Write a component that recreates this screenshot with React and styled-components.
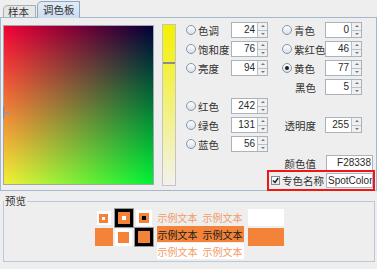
import React from "react";
import styled, { createGlobalStyle } from "styled-components";

const ORANGE = "#f28338";

const GlobalStyle = createGlobalStyle`
  body {
    margin: 0;
    background: #eeeeee;
    font-family: "Liberation Sans", "Noto Sans CJK SC", sans-serif;
    font-size: 10.5px;
    color: #333;
  }
`;

const Page = styled.div`
  width: 377px;
  height: 269px;
  overflow: hidden;
`;

// Tabs
const TabStrip = styled.div`
  display: flex;
  align-items: flex-end;
  height: 17px;
  padding-left: 3px;
  gap: 1px;
  position: relative;
  z-index: 1;
`;

const Tab = styled.div`
  box-sizing: border-box;
  width: ${(p) => (p.$active ? 43 : 33)}px;
  height: ${(p) => (p.$active ? 17 : 12)}px;
  margin-bottom: ${(p) => (p.$active ? -1 : 0)}px;
  padding-left: ${(p) => (p.$active ? 5 : 4)}px;
  display: flex;
  align-items: center;
  line-height: 12px;
  border: 1px solid ${(p) => (p.$active ? "#8ea6c2" : "#a7aeb6")};
  border-bottom: none;
  border-top-left-radius: 5px;
  background: ${(p) =>
    p.$active ? "linear-gradient(#e2ecf7, #cadcef)" : "#e6e6e6"};
  color: #333;
`;

const TabPanel = styled.div`
  box-sizing: border-box;
  height: 174px;
  border: 1px solid #a3b8cc;
  display: flex;
  align-items: flex-start;
  padding-left: 2px;
`;

// Color area
const ColorField = styled.div`
  position: relative;
  box-sizing: border-box;
  width: 151px;
  height: 160px;
  margin-top: 7px;
  border: 1px solid #a2a6aa;
  background: linear-gradient(to bottom, rgb(0, 0, 55), rgb(0, 242, 55)),
    linear-gradient(to right, rgb(242, 0, 0), rgb(0, 0, 0));
  background-blend-mode: screen;
`;

const FieldMarker = styled.svg`
  position: absolute;
  left: -1px;
  top: 80px;
`;

const Slider = styled.div`
  position: relative;
  box-sizing: border-box;
  width: 14px;
  height: 162px;
  margin: 6px 0 0 8px;
  border: 1px solid #c4c4c4;
  background: linear-gradient(#f4f000, #f2f2ee);
`;

const SliderThumb = styled.div`
  position: absolute;
  left: 0;
  right: 0;
  top: 37px;
  height: 2px;
  background: #8c8c8c;
`;

// Controls
const Controls = styled.div`
  display: flex;
  flex-direction: column;
  width: 193px;
  margin: 4px 0 0 6px;
`;

const Grid = styled.div`
  display: grid;
  grid-template-columns: 49px 37px 57px 50px;
  grid-auto-rows: 16px;
  row-gap: 3px;
`;

const RadioLabel = styled.div`
  grid-row: ${(p) => p.$row};
  grid-column: ${(p) => p.$col};
  display: flex;
  align-items: center;
  gap: 2px;
  padding-left: ${(p) => p.$indent}px;
  white-space: nowrap;
`;

const Radio = styled.span`
  position: relative;
  box-sizing: border-box;
  width: 10px;
  height: 10px;
  border-radius: 50%;
  border: 1px solid #8795a6;
  background: linear-gradient(#ffffff, #d6e0ea);
  flex: none;

  &::after {
    content: "";
    display: ${(p) => (p.$checked ? "block" : "none")};
    position: absolute;
    inset: 2px;
    border-radius: 50%;
    background: #1e1e1e;
  }
`;

const TextLabel = styled.div`
  grid-row: ${(p) => p.$row};
  grid-column: ${(p) => p.$col};
  display: flex;
  align-items: center;
  justify-content: flex-end;
  padding-right: 9px;
  white-space: nowrap;
`;

const SpinBox = styled.div`
  grid-row: ${(p) => p.$row};
  grid-column: ${(p) => p.$col};
  box-sizing: border-box;
  width: 37px;
  height: 16px;
  display: flex;
  border: 1px solid #aab2bc;
  background: #fff;
`;

const SpinValue = styled.div`
  flex: 1;
  text-align: right;
  padding-right: 2px;
  line-height: 14px;
  font-size: 10px;
  color: #2a2a2a;
`;

const SpinButtons = styled.div`
  width: 9px;
  display: flex;
  flex-direction: column;
  border-left: 1px solid #b8c0c8;
`;

const SpinButton = styled.div`
  flex: 1;
  display: flex;
  align-items: center;
  justify-content: center;
  background: #eef0f2;

  & + & {
    border-top: 1px solid #b8c0c8;
  }

  &::after {
    content: "";
    border-left: 2px solid transparent;
    border-right: 2px solid transparent;
    ${(p) =>
      p.$up ? "border-bottom: 2px solid #777;" : "border-top: 2px solid #777;"}
  }
`;

const ValueField = styled.div`
  grid-row: ${(p) => p.$row};
  grid-column: ${(p) => p.$col};
  box-sizing: border-box;
  width: 47px;
  height: 16px;
  margin-left: 1px;
  border: 1px solid #aab2bc;
  background: #fff;
  text-align: right;
  padding-right: 1px;
  line-height: 14px;
  font-size: 10px;
  color: #2a2a2a;
`;

const SpotBox = styled.div`
  align-self: flex-end;
  box-sizing: border-box;
  width: 108px;
  height: 21px;
  margin-top: -1px;
  border: 2px solid #f01616;
  display: flex;
  align-items: center;
  padding-left: 2px;
  gap: 2px;
`;

const CheckBox = styled.span`
  box-sizing: border-box;
  width: 9px;
  height: 9px;
  border: 1px solid #7d8b9b;
  background: linear-gradient(#ffffff, #dfe6ee);
  display: flex;
  align-items: center;
  justify-content: center;
  flex: none;
`;

const SpotLabel = styled.span`
  white-space: nowrap;
`;

const SpotField = styled.div`
  box-sizing: border-box;
  width: 48px;
  height: 15px;
  border: 1px solid #a8b8cc;
  background: #fff;
  padding-left: 1px;
  line-height: 13px;
  font-size: 10px;
  color: #2a2a2a;
  white-space: nowrap;
  overflow: hidden;
`;

// Preview
const PreviewGroup = styled.fieldset`
  margin: 4px 2px 0 3px;
  padding: 1px 0 2px;
  border: 1px solid #b9c9d9;
  min-width: 0;
`;

const PreviewTitle = styled.legend`
  padding: 0 1px;
  line-height: 13px;
  color: #333;
`;

const PreviewBody = styled.div`
  display: flex;
  justify-content: center;
  align-items: flex-start;
`;

const SwatchGrid = styled.div`
  display: grid;
  grid-template-columns: repeat(3, 18px);
  grid-auto-rows: 18px;
  gap: 1px 2px;
  place-items: center;
  margin-right: 4px;
`;

const Swatch = styled.div`
  width: ${(p) => p.$size}px;
  height: ${(p) => p.$size}px;
  background: ${(p) => p.$bg};
  display: flex;
  align-items: center;
  justify-content: center;
  box-shadow: ${(p) => (p.$bg === "#000" ? "0 0 0 1px #9a9a9a" : "none")};
`;

const SwatchInner = styled.div`
  width: ${(p) => p.$size}px;
  height: ${(p) => p.$size}px;
  background: ${ORANGE};
  display: flex;
  align-items: center;
  justify-content: center;
`;

const SwatchDot = styled.div`
  width: ${(p) => p.$size}px;
  height: ${(p) => p.$size}px;
  background: ${(p) => p.$color};
`;

const SampleColumn = styled.div`
  display: flex;
  flex-direction: column;
  gap: 1px;
  width: 87px;
  margin-right: 4px;
`;

const SampleRow = styled.div`
  height: 16px;
  display: flex;
  align-items: center;
  justify-content: center;
  gap: 5px;
  font-size: 10px;
  background: ${(p) => p.$bg};
  color: ${(p) => p.$color};
`;

const ColorChips = styled.div`
  display: flex;
  flex-direction: column;
  gap: 2px;
`;

const Chip = styled.div`
  width: 36px;
  height: ${(p) => p.$h}px;
  background: ${(p) => p.$bg};
`;

const leftRows = [
  { label: "色调", value: 24, row: 1 },
  { label: "饱和度", value: 76, row: 2 },
  { label: "亮度", value: 94, row: 3 },
  { label: "红色", value: 242, row: 5 },
  { label: "绿色", value: 131, row: 6 },
  { label: "蓝色", value: 56, row: 7 },
];

const rightRadios = [
  { label: "青色", value: 0, row: 1 },
  { label: "紫红色", value: 46, row: 2 },
  { label: "黄色", value: 77, row: 3, checked: true },
];

const rightPlain = [
  { label: "黑色", value: 5, row: 4 },
  { label: "透明度", value: 255, row: 6 },
];

const Spinner = ({ row, col, value }) => (
  <SpinBox $row={row} $col={col}>
    <SpinValue>{value}</SpinValue>
    <SpinButtons>
      <SpinButton $up />
      <SpinButton />
    </SpinButtons>
  </SpinBox>
);

const Sample = ({ bg, color }) => (
  <SampleRow $bg={bg} $color={color}>
    <span>示例文本</span>
    <span>示例文本</span>
  </SampleRow>
);

const App = () => {
  return (
    <Page>
      <GlobalStyle />
      <TabStrip>
        <Tab>样本</Tab>
        <Tab $active>调色板</Tab>
      </TabStrip>
      <TabPanel>
        <ColorField>
          <FieldMarker width="8" height="13" viewBox="0 0 8 13">
            <line x1="0.5" y1="0" x2="0.5" y2="13" stroke="#6f93c4" strokeWidth="1.5" />
            <line x1="0" y1="6.5" x2="7" y2="6.5" stroke="#7f98b8" strokeWidth="1" />
          </FieldMarker>
        </ColorField>
        <Slider>
          <SliderThumb />
        </Slider>
        <Controls>
          <Grid>
            {leftRows.map((r) => (
              <React.Fragment key={r.label}>
                <RadioLabel $row={r.row} $col={1} $indent={4}>
                  <Radio />
                  {r.label}
                </RadioLabel>
                <Spinner row={r.row} col={2} value={r.value} />
              </React.Fragment>
            ))}
            {rightRadios.map((r) => (
              <React.Fragment key={r.label}>
                <RadioLabel $row={r.row} $col={3} $indent={14}>
                  <Radio $checked={r.checked} />
                  {r.label}
                </RadioLabel>
                <Spinner row={r.row} col={4} value={r.value} />
              </React.Fragment>
            ))}
            {rightPlain.map((r) => (
              <React.Fragment key={r.label}>
                <TextLabel $row={r.row} $col={3}>
                  {r.label}
                </TextLabel>
                <Spinner row={r.row} col={4} value={r.value} />
              </React.Fragment>
            ))}
            <TextLabel $row={8} $col={3}>
              颜色值
            </TextLabel>
            <ValueField $row={8} $col={4}>
              F28338
            </ValueField>
          </Grid>
          <SpotBox>
            <CheckBox>
              <svg width="7" height="7" viewBox="0 0 7 7">
                <path d="M1 3.5 L3 5.5 L6.2 1" fill="none" stroke="#1e1e1e" strokeWidth="1.4" />
              </svg>
            </CheckBox>
            <SpotLabel>专色名称</SpotLabel>
            <SpotField>SpotColor</SpotField>
          </SpotBox>
        </Controls>
      </TabPanel>
      <PreviewGroup>
        <PreviewTitle>预览</PreviewTitle>
        <PreviewBody>
          <SwatchGrid>
            <Swatch $size={14} $bg="#fff">
              <SwatchInner $size={9}>
                <SwatchDot $size={3} $color="#fff" />
              </SwatchInner>
            </Swatch>
            <Swatch $size={18} $bg="#000">
              <SwatchInner $size={12}>
                <SwatchDot $size={4} $color="#fff" />
              </SwatchInner>
            </Swatch>
            <Swatch $size={16} $bg="#fff">
              <SwatchInner $size={10}>
                <SwatchDot $size={4} $color="#000" />
              </SwatchInner>
            </Swatch>
            <Swatch $size={18} $bg={ORANGE} />
            <Swatch $size={17} $bg="#fff">
              <SwatchInner $size={11} />
            </Swatch>
            <Swatch $size={18} $bg="#000">
              <SwatchInner $size={12} />
            </Swatch>
          </SwatchGrid>
          <SampleColumn>
            <Sample bg="transparent" color="#f39a62" />
            <Sample bg={ORANGE} color="#1a1a1a" />
            <Sample bg="#fff" color="#f39a62" />
          </SampleColumn>
          <ColorChips>
            <Chip $h={17} $bg="#fff" />
            <Chip $h={18} $bg={ORANGE} />
          </ColorChips>
        </PreviewBody>
      </PreviewGroup>
    </Page>
  );
};

export default App;
